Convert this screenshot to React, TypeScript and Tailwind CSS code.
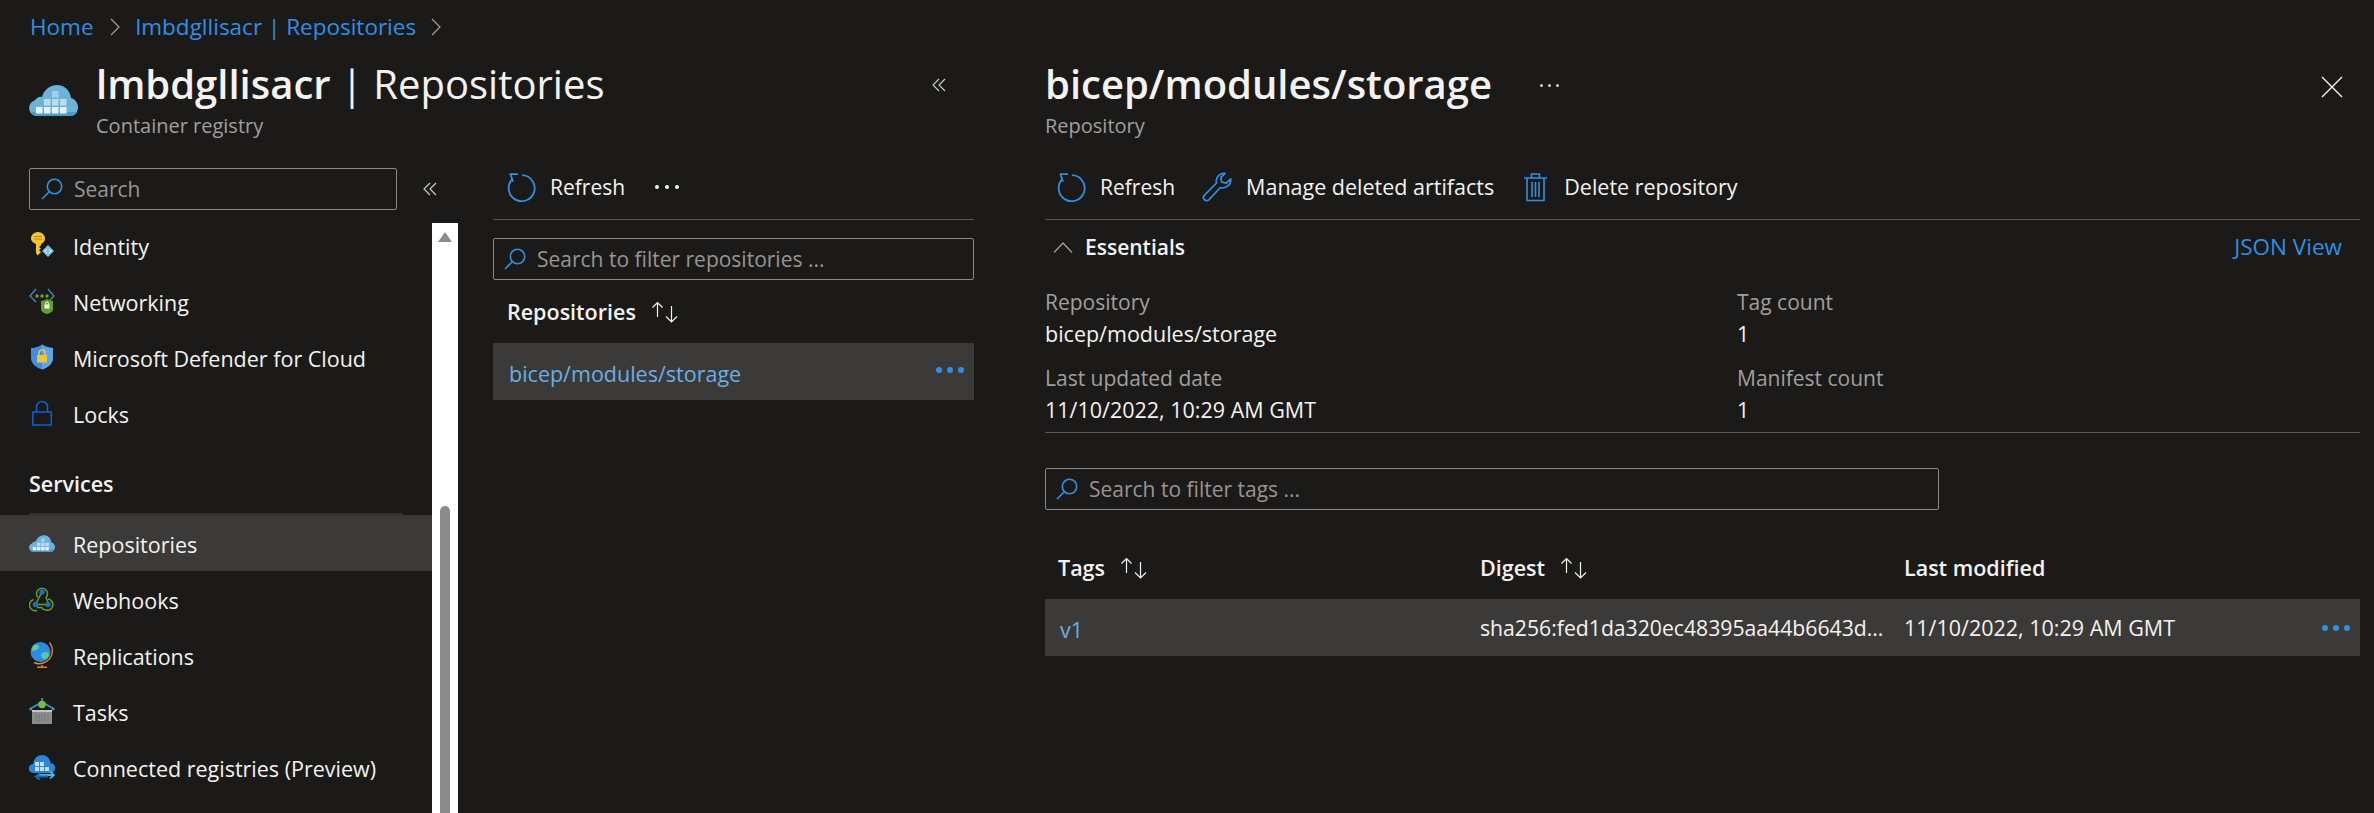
import React from "react";

const Search = () => (
  <svg width="22" height="22" viewBox="0 0 22 22" fill="none" stroke="#2f8fe5" strokeWidth="1.6" className="shrink-0">
    <circle cx="13.5" cy="8.5" r="7.2" />
    <path d="M8.5 13.5 1 21" />
  </svg>
);
const Refresh = () => (
  <svg width="29" height="29" viewBox="0 0 29 29" fill="none" stroke="#2f8fe5" strokeWidth="1.8" className="shrink-0">
    <path d="M15 2.2A13 13 0 1 1 5.500 6" />
    <path d="M2.600 1.200H11M3.500 1.200l2.500 7.500" />
  </svg>
);
const Wrench = () => (
  <svg width="30" height="30" viewBox="0 0 30 30" fill="none" stroke="#2f8fe5" strokeWidth="1.7" strokeLinejoin="round" className="shrink-0">
    <path d="M20 1.500a8 8 0 0 1 3-.2l-4.200 4.400 1 4.500 4.500 1 4.400-4.400a8 8 0 0 1-10.300 8.700L6.800 27.800a3 3 0 0 1-4.400-.2 3 3 0 0 1-.1-4.200L14.500 11A8 8 0 0 1 20 1.500Z" />
  </svg>
);
const Trash = () => (
  <svg width="23" height="29" viewBox="0 0 23 29" fill="none" stroke="#2f8fe5" strokeWidth="1.6" className="shrink-0">
    <path d="M0 5h23M3 5v22.500h17V5M7.500 5V1h8v4M8 9v15M11.500 9v15M15 9v15" />
  </svg>
);
const Sort = () => (
  <svg width="29" height="22" viewBox="0 0 29 22" fill="none" stroke="#f3f2f1" strokeWidth="1.2" className="shrink-0">
    <path d="M7.500 16V1.500M2.500 6.500l5-5 5 5M21.500 5v16M16 15.500l5.500 5.500 5.500-5.500" />
  </svg>
);
const DoubleLeft = () => (
  <svg width="14" height="14" viewBox="0 0 14 14" fill="none" stroke="#d2d0ce" strokeWidth="1.1" className="shrink-0">
    <path d="M7 1 1 7l6 6M13 1 7 7l6 6" />
  </svg>
);
const Chevron = () => (
  <svg width="10" height="18" viewBox="0 0 10 18" fill="none" stroke="#a19f9d" strokeWidth="1.2" className="shrink-0">
    <path d="M1 1l8 8-8 8" />
  </svg>
);
const Dots = ({ color, size = 6, gap = 5 }: { color: string; size?: number; gap?: number }) => (
  <svg width={size * 3 + gap * 2} height={size} viewBox={`0 0 ${size * 3 + gap * 2} ${size}`} fill={color} className="shrink-0">
    <circle cx={size / 2} cy={size / 2} r={size / 2} />
    <circle cx={size * 1.5 + gap} cy={size / 2} r={size / 2} />
    <circle cx={size * 2.5 + gap * 2} cy={size / 2} r={size / 2} />
  </svg>
);

const CloudSquares = ({ w, h }: { w: number; h: number }) => (
  <svg width={w} height={h} viewBox="0 0 49 31" className="shrink-0">
    <path d="M8 31a8 8 0 0 1-2-15.700C8 12 11 11 13 12 15 4 22 0 28 0c7 0 13 5 14 13 4 1 7 5 7 9 0 5-3 9-8 9Z" fill="#6cb3d8" />
    <path d="M8 31h33c4 0 6-2 7-4H1c1 2 4 4 7 4Z" fill="#4c9cc9" />
    {[[7,22],[15,22],[23,22],[31,22],[15,14],[23,14],[31,14],[23,6]].map(([x,y],i)=>(
      <rect key={i} x={x} y={y} width="6.500" height="6.500" fill={y===22?"#e6f3fa":y===14?"#bcdcee":"#a3cfe6"} />
    ))}
  </svg>
);
const Identity = () => (
  <svg width="26" height="26" viewBox="0 0 26 26" className="shrink-0">
    <path d="M9 0c4 0 7 3 7 6.500 0 2.500-1.500 4.500-4 5.500v1.500l-2 1.500 2 1.500-2 1.500 2 2-3.500 3.500L7 21V12c-3-1-5-3-5-5.500C2 3 5 0 9 0Z" fill="#f5c433" />
    <path d="M5 4.500h8M5 7h8" stroke="#b58a12" strokeWidth="1" />
    <path d="M19 13l6 6-6 6-6-6Z" fill="#7fc0e8" />
    <path d="M18 17l-2 2 2 2M20 17l2 2-2 2" stroke="#fff" strokeWidth="0.800" fill="none" />
  </svg>
);
const Networking = () => (
  <svg width="26" height="26" viewBox="0 0 26 26" className="shrink-0">
    <path d="M7 1 1 8l6 6M19 1l6 7-6 6" fill="none" stroke="#3f95c9" strokeWidth="1.200" />
    <circle cx="8" cy="8" r="1.700" fill="#6aa92e" /><circle cx="13" cy="8" r="1.700" fill="#6aa92e" /><circle cx="18" cy="8" r="1.700" fill="#6aa92e" />
    <path d="M12 13c2 0 4-1 6-2 2 1 4 2 6 2v8c0 3-4 4.500-6 5-2-.5-6-2-6-5Z" fill="#5ea127" transform="translate(0 0)" />
    <rect x="15.500" y="16.500" width="5" height="4" fill="#fff" />
    <path d="M16.500 16.500v-1a1.500 1.500 0 0 1 3 0v1" stroke="#fff" fill="none" />
  </svg>
);
const Defender = () => (
  <svg width="26" height="26" viewBox="0 0 26 26" className="shrink-0">
    <path d="M2 4c4 0 8-1.500 11-3.500C16 2.500 20 4 24 4v10c0 6-6 10-11 11.500C8 24 2 20 2 14Z" fill="#3f8fe2" />
    <path d="M13 .5C16 2.500 20 4 24 4v10c0 6-6 10-11 11.500Z" fill="#5aa6ec" />
    <rect x="8" y="11" width="10" height="7.500" fill="#f5c433" />
    <path d="M10 11V9a3 3 0 0 1 6 0v2" stroke="#f5c433" strokeWidth="1.500" fill="none" />
  </svg>
);
const Lock = () => (
  <svg width="26" height="26" viewBox="0 0 26 26" className="shrink-0" fill="none" stroke="#1160d2" strokeWidth="1.500">
    <rect x="3.800" y="12" width="18.500" height="13" />
    <path d="M7.500 12V7a5.500 5.500 0 0 1 11 0v5" />
  </svg>
);
const Webhook = () => (
  <svg width="26" height="26" viewBox="0 0 26 26" className="shrink-0" fill="none">
    <path d="M9 11.500A5.500 5.500 0 1 1 17 11.500L19.500 17.500" stroke="#5ea127" strokeWidth="1.500" />
    <path d="M13 6 6.500 18.500M8 24.500a5.500 5.500 0 1 1-3.500-11" stroke="#5ea127" strokeWidth="1.500" />
    <path d="M6.500 18.500h12.500M19 13a5.600 5.600 0 1 1-2 11c-2 0-3.500-1-4.500-2.500H8" stroke="#5ea127" strokeWidth="1.500" />
    <circle cx="13" cy="6" r="2.700" fill="#1b6fc9" /><circle cx="6.500" cy="18.500" r="2.700" fill="#1b6fc9" /><circle cx="19" cy="18.500" r="2.700" fill="#1b6fc9" />
  </svg>
);
const Globe = () => (
  <svg width="26" height="26" viewBox="0 0 26 26" className="shrink-0" fill="none">
    <circle cx="11.500" cy="10" r="10" fill="#2b8ce0" />
    <path d="M5 3c3-1 5 0 5 2s-3 3-5 4-3-4 0-6ZM13 11c3-2 7-1 7 1 0 3-3 6-5 5s-4-4-2-6Z" fill="#5cc9a0" />
    <path d="M20.500 .5A13 13 0 0 1 5 20.500M13 23v2M8 25.300h10" stroke="#e8832a" strokeWidth="1.400" />
  </svg>
);
const Tasks = () => (
  <svg width="26" height="26" viewBox="0 0 26 26" className="shrink-0" fill="none">
    <path d="M1 11 13 4l12 7" stroke="#3f95c9" strokeWidth="1.600" />
    <circle cx="1.800" cy="11" r="1.500" fill="#3f95c9" /><circle cx="24.200" cy="11" r="1.500" fill="#3f95c9" />
    <path d="M13 0v3" stroke="#3f95c9" strokeWidth="1.600" />
    <circle cx="13" cy="6.500" r="3.800" fill="#7ab648" />
    <rect x="3" y="12" width="20" height="14" fill="#8d8d8d" />
    <rect x="3" y="12" width="20" height="2" fill="#c4c4c4" />
    <path d="M7 16v8M10 16v8M13 16v8M16 16v8M19 16v8" stroke="#6e6e6e" strokeWidth="0.800" />
  </svg>
);
const Connected = () => (
  <svg width="26" height="26" viewBox="0 0 26 26" className="shrink-0">
    <path d="M4.500 19a4.500 4.500 0 0 1-.5-9C5 4 9 1 13 1c4.500 0 8 3 8.500 8a5 5 0 0 1-.5 10Z" fill="#2d84dc" />
    {[[6,8],[11,8],[6,13],[11,13],[16,13]].map(([x,y],i)=>(<rect key={i} x={x} y={y} width="4" height="4" fill="#c5e2f8" />))}
    <path d="M9 21h16M21 17.500l4 3.500-4 3.500" stroke="#45b5ea" strokeWidth="1.800" fill="none" />
    <path d="M7 22.500h12M11 19l-4.500 3.500 4.500 3.500" stroke="#1464b8" strokeWidth="1.800" fill="none" />
  </svg>
);

const Nav = ({ icon, label, active }: { icon: React.ReactNode; label: string; active?: boolean }) => (
  <div className={`h-[56px] flex items-center pl-[29px] ${active ? "bg-[#3b3a39]" : ""}`}>
    <span className="w-[44px] flex shrink-0">{icon}</span>
    <span className="text-[21.5px] leading-[30px] pt-[3px] text-[#f3f2f1] whitespace-nowrap">{label}</span>
  </div>
);

const SearchBox = ({ text, className }: { text: string; className: string }) => (
  <div className={`h-[42px] flex items-center border border-[#8a8886] rounded-[2px] ${className}`}>
    <Search />
    <span className="text-[21px] leading-[30px] text-[#979593] ml-[11px] whitespace-nowrap">{text}</span>
  </div>
);

const Field = ({ label, value }: { label: string; value: string }) => (
  <div>
    <div className="text-[21px] leading-[31px] text-[#a19f9d] whitespace-nowrap">{label}</div>
    <div className="text-[21.5px] leading-[31px] text-[#f3f2f1] whitespace-nowrap">{value}</div>
  </div>
);

export default function App() {
  return (
    <div className="w-[2374px] h-[813px] overflow-hidden bg-[#1b1a19] flex font-['Open_Sans','Noto_Sans',sans-serif] text-[#f3f2f1]">
      <div className="w-[1010px] shrink-0 flex flex-col">
        <div className="h-[54px] flex items-center pl-[30px] text-[22.5px] text-[#2f8fe5] whitespace-nowrap">
          <span>Home</span>
          <span className="mx-[16px]"><Chevron /></span>
          <span>lmbdgllisacr | Repositories</span>
          <span className="ml-[15px]"><Chevron /></span>
        </div>
        <div className="h-[114px] flex">
          <div className="pl-[29px] pt-[31px] w-[96px] shrink-0"><CloudSquares w={49} h={31} /></div>
          <div className="flex-1 pt-[3px]">
            <div className="text-[40px] leading-[54px] whitespace-nowrap"><span className="font-semibold">lmbdgllisacr</span> | Repositories</div>
            <div className="text-[20px] leading-[30px] text-[#a19f9d] whitespace-nowrap">Container registry</div>
          </div>
          <div className="pr-[64px] pt-[24px]"><DoubleLeft /></div>
        </div>
        <div className="flex-1 flex min-h-0">
          <div className="w-[458px] shrink-0 flex flex-col">
            <div className="flex items-center pl-[29px]">
              <SearchBox text="Search" className="w-[368px] pl-[11px]" />
              <span className="ml-[26px]"><DoubleLeft /></span>
            </div>
            <div className="flex-1 mt-[13px] flex min-h-0">
              <div className="flex-1 overflow-hidden">
                <div className="-mt-[6px]">
                  <Nav icon={<Identity />} label="Identity" />
                  <Nav icon={<Networking />} label="Networking" />
                  <Nav icon={<Defender />} label="Microsoft Defender for Cloud" />
                  <Nav icon={<Lock />} label="Locks" />
                  <div className="h-[72px] pl-[29px] pt-[28px] text-[21.5px] leading-[30px] font-semibold">Services</div>
                  <div className="mx-[29px] h-[2px] bg-[#323130]" />
                  <Nav icon={<CloudSquares w={26} h={17} />} label="Repositories" active />
                  <Nav icon={<Webhook />} label="Webhooks" />
                  <Nav icon={<Globe />} label="Replications" />
                  <Nav icon={<Tasks />} label="Tasks" />
                  <Nav icon={<Connected />} label="Connected registries (Preview)" />
                </div>
              </div>
              <div className="w-[26px] bg-white flex flex-col items-center pt-[9px]">
                <div className="w-0 h-0 border-l-[7px] border-r-[7px] border-b-[10px] border-l-transparent border-r-transparent border-b-[#8c8c8c]" />
                <div className="flex-1 w-[10px] mt-[264px] bg-[#8c8c8c] rounded-t-[5px]" />
              </div>
            </div>
          </div>
          <div className="w-[516px] shrink-0 pl-[35px]">
            <div className="h-[52px] flex items-center pl-[14px] border-b border-[#5c5a58] pb-[13px]">
              <Refresh />
              <span className="text-[21px] leading-[30px] ml-[14px]">Refresh</span>
              <span className="ml-[30px]"><Dots color="#f3f2f1" size={4} gap={6} /></span>
            </div>
            <SearchBox text="Search to filter repositories ..." className="w-[481px] mt-[18px] pl-[10px]" />
            <div className="h-[63px] flex items-center pl-[14px]">
              <span className="text-[21.5px] leading-[30px] font-semibold">Repositories</span>
              <span className="ml-[14px]"><Sort /></span>
            </div>
            <div className="w-[481px] h-[57px] bg-[#3b3a39] flex items-center pl-[16px] pr-[10px] justify-between">
              <span className="text-[21.5px] leading-[30px] text-[#69afe5] pt-[4px]">bicep/modules/storage</span>
              <span className="-mt-[4px]"><Dots color="#2f8fe5" /></span>
            </div>
          </div>
        </div>
      </div>
      <div className="flex-1 pl-[35px] pr-[14px] flex flex-col">
        <div className="h-[168px] flex pt-[57px]">
          <div>
            <div className="text-[40px] leading-[54px] font-semibold whitespace-nowrap">bicep/modules/storage</div>
            <div className="text-[20px] leading-[30px] text-[#a19f9d]">Repository</div>
          </div>
          <span className="ml-[48px] mt-[27px]"><Dots color="#d2d0ce" size={3} gap={5} /></span>
          <span className="ml-auto mt-[19px] mr-[17px]">
            <svg width="22" height="22" viewBox="0 0 22 22" stroke="#f3f2f1" strokeWidth="1.400"><path d="M1 1l20 20M21 1 1 21" /></svg>
          </span>
        </div>
        <div className="h-[52px] flex items-center pl-[12px] border-b border-[#5c5a58] pb-[13px]">
          <Refresh />
          <span className="text-[21px] leading-[30px] ml-[14px]">Refresh</span>
          <span className="ml-[27px]"><Wrench /></span>
          <span className="text-[21.5px] leading-[30px] ml-[14px] whitespace-nowrap">Manage deleted artifacts</span>
          <span className="ml-[30px]"><Trash /></span>
          <span className="text-[21.5px] leading-[30px] ml-[17px] whitespace-nowrap">Delete repository</span>
        </div>
        <div className="h-[54px] flex items-center pl-[8px] pr-[18px]">
          <svg width="20" height="11" viewBox="0 0 20 11" fill="none" stroke="#a19f9d" strokeWidth="1.300"><path d="M1 10.500 10 1l9 9.500" /></svg>
          <span className="text-[21px] leading-[30px] font-semibold ml-[12px]">Essentials</span>
          <span className="ml-auto text-[22.5px] leading-[30px] text-[#2f8fe5]">JSON View</span>
        </div>
        <div className="grid grid-cols-[692px_1fr] h-[159px] border-b border-[#5c5a58] pt-[13px] content-start">
          <div className="flex flex-col gap-[14px]"><Field label="Repository" value="bicep/modules/storage" /><Field label="Last updated date" value="11/10/2022, 10:29 AM GMT" /></div>
          <div className="flex flex-col gap-[14px]"><Field label="Tag count" value="1" /><Field label="Manifest count" value="1" /></div>
        </div>
        <SearchBox text="Search to filter tags ..." className="w-[894px] mt-[35px] pl-[10px]" />
        <div className="grid grid-cols-[435px_424px_1fr] h-[89px] items-center pt-[27px] pl-[13px]">
          <div className="flex items-center"><span className="text-[21.5px] leading-[30px] font-semibold">Tags</span><span className="ml-[14px]"><Sort /></span></div>
          <div className="flex items-center -ml-[13px]"><span className="text-[21.5px] leading-[30px] font-semibold">Digest</span><span className="ml-[14px]"><Sort /></span></div>
          <div className="text-[21.5px] leading-[30px] font-semibold -ml-[13px]">Last modified</div>
        </div>
        <div className="h-[57px] bg-[#3b3a39] grid grid-cols-[435px_424px_1fr] items-center pl-[15px]">
          <span className="text-[21.5px] leading-[30px] text-[#69afe5] pt-[5px]">v1</span>
          <span className="text-[21.2px] leading-[30px] -ml-[15px] whitespace-nowrap">sha256:fed1da320ec48395aa44b6643d...</span>
          <div className="flex items-center -ml-[15px] pr-[10px] justify-between">
            <span className="text-[21.5px] leading-[30px] whitespace-nowrap">11/10/2022, 10:29 AM GMT</span>
            <Dots color="#2f8fe5" />
          </div>
        </div>
      </div>
    </div>
  );
}
